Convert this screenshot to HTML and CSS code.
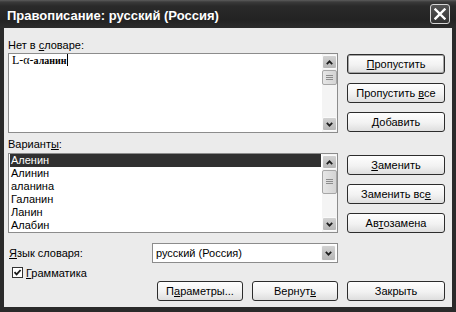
FILE: index.html
```html
<!DOCTYPE html>
<html lang="ru">
<head>
	<meta charset="UTF-8">
	<title>Правописание</title>
	<link rel="stylesheet" href="styles.css">
</head>
<body>
	<div class="window">
		<div class="titlebar">
			<span class="title">Правописание: русский (Россия)</span>
			<span class="close">
				<svg width="12" height="12" viewBox="0 0 12 12"><path d="M1.5 1.5 L10.5 10.5 M10.5 1.5 L1.5 10.5" stroke="#fff" stroke-width="2.4" stroke-linecap="square"/></svg>
			</span>
		</div>

		<div class="content">
			<div class="field">
				<div class="label">Нет в <u>с</u>ловаре:</div>
				<div class="box">
					<div class="edit-text"><span class="w-lat">L-α-</span><span class="w-rus">аланин</span><span class="caret"></span></div>
					<div class="scroll">
						<span class="sb-btn"><svg width="7" height="5" viewBox="0 0 7 5"><path d="M0.8 4.2 L3.5 1.4 L6.2 4.2" fill="none" stroke="#1e1e1e" stroke-width="1.8"/></svg></span>
						<span class="sb-thumb short"><svg width="7" height="6" viewBox="0 0 7 6"><path d="M0 0.5 H7 M0 2.5 H7 M0 4.5 H7" stroke="#8c8c8c"/></svg></span>
						<span class="sb-track"></span>
						<span class="sb-btn"><svg width="7" height="5" viewBox="0 0 7 5"><path d="M0.8 0.8 L3.5 3.6 L6.2 0.8" fill="none" stroke="#1e1e1e" stroke-width="1.8"/></svg></span>
					</div>
				</div>
			</div>
			<div class="stack first">
				<button class="btn default"><span><u>П</u>ропустить</span></button>
				<button class="btn"><span>Пропустить <u>в</u>се</span></button>
				<button class="btn"><span><u>Д</u>обавить</span></button>
			</div>

			<div class="field">
				<div class="label second">Вариант<u>ы</u>:</div>
				<div class="box">
					<ul class="items">
						<li class="sel">Аленин</li>
						<li>Алинин</li>
						<li>аланина</li>
						<li>Галанин</li>
						<li>Ланин</li>
						<li>Алабин</li>
					</ul>
					<div class="scroll">
						<span class="sb-btn"><svg width="7" height="5" viewBox="0 0 7 5"><path d="M0.8 4.2 L3.5 1.4 L6.2 4.2" fill="none" stroke="#1e1e1e" stroke-width="1.8"/></svg></span>
						<span class="sb-thumb tall"><svg width="7" height="6" viewBox="0 0 7 6"><path d="M0 0.5 H7 M0 2.5 H7 M0 4.5 H7" stroke="#8c8c8c"/></svg></span>
						<span class="sb-track"></span>
						<span class="sb-btn"><svg width="7" height="5" viewBox="0 0 7 5"><path d="M0.8 0.8 L3.5 3.6 L6.2 0.8" fill="none" stroke="#1e1e1e" stroke-width="1.8"/></svg></span>
					</div>
				</div>
			</div>
			<div class="stack second">
				<button class="btn"><span><u>З</u>аменить</span></button>
				<button class="btn"><span>Заменить вс<u>е</u></span></button>
				<button class="btn"><span>Ав<u>т</u>озамена</span></button>
			</div>

			<div class="lang">
				<span class="lang-label"><u>Я</u>зык словаря:</span>
				<div class="combo">
					<span class="combo-text">русский (Россия)</span>
					<span class="sb-btn combo-btn"><svg width="7" height="5" viewBox="0 0 7 5"><path d="M0.8 0.8 L3.5 3.6 L6.2 0.8" fill="none" stroke="#1e1e1e" stroke-width="1.8"/></svg></span>
				</div>
			</div>

			<div class="check">
				<span class="checkbox"><svg width="9" height="9" viewBox="0 0 9 9"><path d="M1.5 4.2 L3.6 6.4 L7.6 2" fill="none" stroke="#1a1a1a" stroke-width="1.8"/></svg></span>
				<span><u>Г</u>рамматика</span>
			</div>

			<div class="bottom">
				<button class="btn small"><span>П<u>а</u>раметры...</span></button>
				<button class="btn small"><span>Вернут<u>ь</u></span></button>
			</div>
			<button class="btn close-btn"><span>Закрыть</span></button>
		</div>
	</div>
</body>
</html>
```

FILE: styles.css
```css
body{
	margin: 0;
	font-family: "Liberation Sans", Arial, sans-serif;
	font-size: 11px;
	color: #000;
}
ul{
	list-style: none; margin: 0; padding: 0;
}
u{
	text-underline-offset: 1px;
}

.window{
	width: 456px;
	height: 312px;
	background: #2a2a2a;
	display: flex;
	flex-direction: column;
}

/* title bar */
.titlebar{
	height: 28px;
	flex: none;
	display: flex;
	align-items: center;
	justify-content: space-between;
	padding: 0 6px 0 7px;
	background: linear-gradient(#5c5c5c 0, #3a3a3a 2px, #2a2a2a 6px, #232323 20px, #2c2c2c 28px);
}
.title{
	color: #fff;
	font-weight: bold;
	font-size: 13px;
	padding-top: 3px;
}
.close{
	width: 20px;
	height: 20px;
	box-sizing: border-box;
	border: 1px solid #d6d6d6;
	border-radius: 3px;
	background: linear-gradient(#555, #333);
	display: flex;
	align-items: center;
	justify-content: center;
}

/* dialog body */
.content{
	flex: 1;
	margin: 0 4px 5px;
	background: #ebebeb;
	display: grid;
	grid-template-columns: 330px 98px;
	column-gap: 9px;
	align-content: start;
	padding: 10px 7px 0 4px;
}
.label{
	line-height: 14px;
	margin-bottom: 1px;
}
.label.second{
	margin-top: 4px;
	margin-bottom: 2px;
}

.box{
	height: 80px;
	box-sizing: border-box;
	border: 1px solid #8c8c8c;
	background: #fff;
	display: flex;
}
.edit-text{
	flex: 1;
	padding: 0 3px;
	line-height: 13px;
	font-family: "Liberation Serif", "Times New Roman", serif;
}
.w-lat{
	font-size: 12px;
}
.w-rus{
	font-size: 10px;
	font-weight: bold;
}
.caret{
	display: inline-block;
	width: 1px;
	height: 12px;
	background: #000;
	vertical-align: -2px;
}

.items{
	flex: 1;
	padding: 0 1px 0 1px;
}
.items li{
	height: 13px;
	line-height: 13px;
	padding-left: 1px;
}
.items li.sel{
	background: #303030;
	color: #fff;
}

/* scrollbars */
.scroll{
	width: 15px;
	box-sizing: border-box;
	padding: 1px 0;
	background: #f4f4f4;
	display: flex;
	flex-direction: column;
}
.sb-btn{
	height: 14px;
	flex: none;
	box-sizing: border-box;
	border: 1px solid #fafafa;
	border-radius: 2px;
	background: linear-gradient(#d2d2d2, #b6b6b6);
	display: flex;
	align-items: center;
	justify-content: center;
}
.sb-thumb{
	flex: none;
	margin-top: 1px;
	box-sizing: border-box;
	border: 1px solid #a6a6a6;
	border-radius: 2px;
	background: linear-gradient(90deg, #e6e6e6, #d4d4d4);
	display: flex;
	align-items: center;
	justify-content: center;
}
.sb-thumb.short{
	height: 15px;
}
.sb-thumb.tall{
	height: 24px;
}
.sb-track{
	flex: 1;
}

/* buttons */
.stack{
	display: flex;
	flex-direction: column;
	gap: 9px;
}
.stack.first{
	padding-top: 16px;
}
.stack.second{
	padding-top: 22px;
}
.btn{
	height: 20px;
	box-sizing: border-box;
	padding: 0;
	border: 1px solid #2c2c2c;
	border-radius: 3px;
	background: linear-gradient(#fefefe, #f2f2f2 55%, #dedede);
	font: inherit;
	color: #000;
	display: flex;
	align-items: center;
	justify-content: center;
}
.btn.default{
	box-shadow: inset 0 0 0 1px #a4a4a4;
}

/* language */
.lang{
	grid-column: 1;
	margin-top: 10px;
	display: grid;
	grid-template-columns: 144px 186px;
	align-items: center;
}
.lang-label{
	padding-left: 1px;
}
.combo{
	height: 20px;
	box-sizing: border-box;
	border: 1px solid #8c8c8c;
	background: #fff;
	display: flex;
	align-items: center;
	padding: 1px;
}
.combo-text{
	flex: 1;
	padding-left: 2px;
}
.combo-btn{
	width: 15px;
	height: 16px;
}

.check{
	grid-column: 1;
	margin-top: 4px;
	display: flex;
	align-items: center;
	gap: 3px;
	padding-left: 4px;
	height: 11px;
}
.checkbox{
	width: 11px;
	height: 11px;
	box-sizing: border-box;
	border: 1px solid #333;
	background: #fff;
	display: flex;
	align-items: center;
	justify-content: center;
}

.bottom{
	grid-column: 1;
	margin-top: 3px;
	display: flex;
	justify-content: flex-end;
	gap: 9px;
}
.btn.small{
	width: 86px;
}
.close-btn{
	margin-top: 3px;
}
```
